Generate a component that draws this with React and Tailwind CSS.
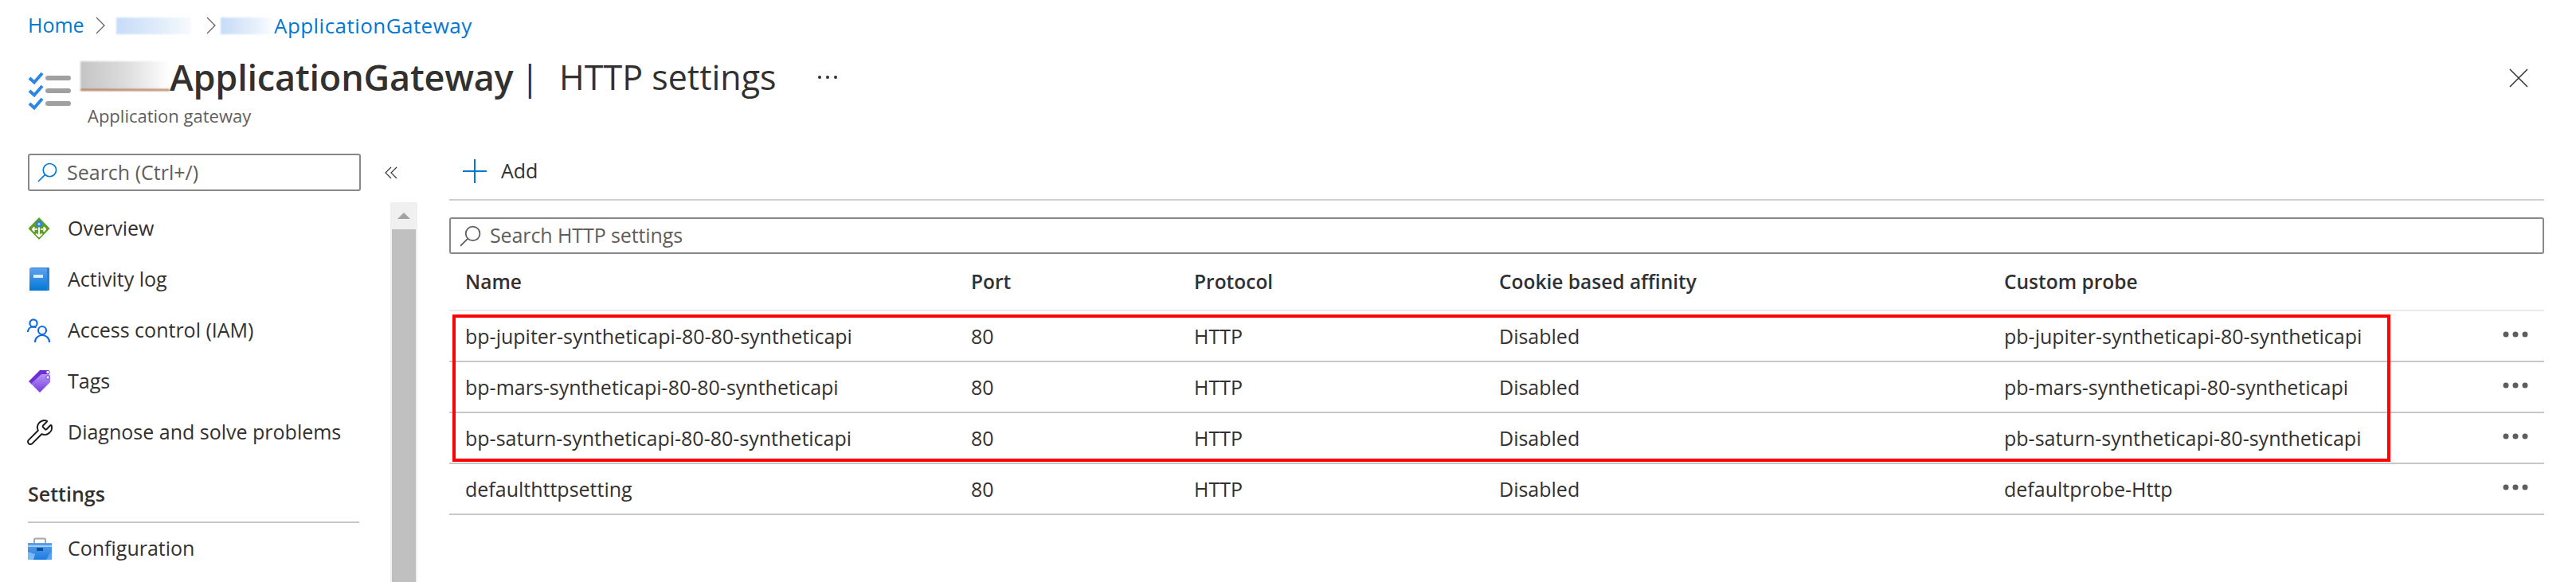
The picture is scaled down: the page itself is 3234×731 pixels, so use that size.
import React from 'react';
import { Wrench } from 'lucide-react';

const rows = [
    ['bp-jupiter-syntheticapi-80-80-syntheticapi', 'pb-jupiter-syntheticapi-80-syntheticapi'],
    ['bp-mars-syntheticapi-80-80-syntheticapi', 'pb-mars-syntheticapi-80-syntheticapi'],
    ['bp-saturn-syntheticapi-80-80-syntheticapi', 'pb-saturn-syntheticapi-80-syntheticapi'],
    ['defaulthttpsetting', 'defaultprobe-Http'],
];

function Crumb() {
    return (
        <svg width="12" height="22" viewBox="0 0 12 22" fill="none" stroke="#605e5c" strokeWidth="1.2">
            <path d="M1 1l10 10L1 21" />
        </svg>
    );
}

function SearchGlass({ color, size }) {
    return (
        <svg width={size} height={size} viewBox="0 0 26 26" fill="none" stroke={color} strokeWidth="1.7">
            <circle cx="16" cy="10" r="8.5" />
            <path d="M10 16L1 25" />
        </svg>
    );
}

function Dots() {
    return (
        <svg width="32" height="8" viewBox="0 0 32 8" fill="#605e5c">
            <circle cx="4" cy="4" r="3.5" />
            <circle cx="16" cy="4" r="3.5" />
            <circle cx="28" cy="4" r="3.5" />
        </svg>
    );
}

function ChecklistIcon() {
    return (
        <svg width="54" height="48" viewBox="0 0 54 48" fill="none">
            <path d="M2 8l6 5.5L18 2" stroke="#2b86e6" strokeWidth="4" />
            <path d="M2 24l6 5.5L18 18" stroke="#2b86e6" strokeWidth="4" />
            <path d="M2 40l6 5.5L18 34" stroke="#2b86e6" strokeWidth="4" />
            <rect x="22" y="5" width="32" height="6" rx="3" fill="#a0a0a0" />
            <rect x="22" y="21" width="32" height="6" rx="3" fill="#a0a0a0" />
            <rect x="22" y="37" width="32" height="6" rx="3" fill="#a0a0a0" />
        </svg>
    );
}

function OverviewIcon() {
    return (
        <svg width="28" height="28" viewBox="0 0 30 30">
            <path d="M15 0l14.5 15L15 30 .5 15z" fill="#5e9e24" />
            <path d="M15 12v13M15 26l-4-4M15 26l4-4M13 16H6M6 16l3-3M6 16l3 3M17 16h7M24 16l-3-3M24 16l-3 3" stroke="#fff" strokeWidth="2" fill="none" />
            <circle cx="15" cy="9" r="4.5" fill="#2f86e0" />
            <circle cx="15" cy="9" r="1.6" fill="#bcdcf8" />
        </svg>
    );
}

function BookIcon() {
    return (
        <svg className="-ml-[1px]" width="30" height="30" viewBox="0 0 30 30">
            <defs>
                <linearGradient id="book" x1="0" y1="0" x2="0" y2="1">
                    <stop offset="0" stopColor="#5ea0ef" />
                    <stop offset="1" stopColor="#0078d4" />
                </linearGradient>
            </defs>
            <path d="M6 0h21a1 1 0 011 1v27a1 1 0 01-1 1H3V3a3 3 0 013-3z" fill="#2a7fd8" />
            <path d="M5 1h20v28H3V3a2 2 0 012-2z" fill="url(#book)" />
            <rect x="8" y="9" width="12" height="4" fill="#d8ecfb" />
        </svg>
    );
}

function UsersIcon() {
    return (
        <svg className="-ml-[1px]" width="30" height="30" viewBox="0 0 30 30" fill="none" stroke="#0f6cde" strokeWidth="2.2">
            <circle cx="8" cy="6" r="4.6" />
            <path d="M1 17c0-4 3-6.500 7-6.500 1.500 0 2.500.3 3.500.8" />
            <circle cx="19" cy="15" r="5" />
            <path d="M10 30c0-5.500 4-9 9-9s9 3.500 9 9" />
        </svg>
    );
}

function TagIcon() {
    return (
        <svg width="30" height="30" viewBox="0 0 30 30">
            <defs>
                <linearGradient id="tag" x1="0" y1="0" x2="0" y2="1">
                    <stop offset="0" stopColor="#b796f9" />
                    <stop offset="1" stopColor="#773adc" />
                </linearGradient>
            </defs>
            <path d="M1 15L15 1h10l2 3-22 15z" fill="#6d2fd5" />
            <path d="M4 18L17 6h9a2 2 0 012 2v8L15 29z" fill="url(#tag)" />
            <circle cx="25" cy="3.500" r="2.200" fill="#fff" stroke="#6d2fd5" />
            <circle cx="25" cy="10" r="2.200" fill="#fff" stroke="#6d2fd5" />
        </svg>
    );
}

function ToolboxIcon() {
    return (
        <svg width="30" height="28" viewBox="0 0 30 28">
            <defs>
                <linearGradient id="box" x1="0" y1="0" x2="0" y2="1">
                    <stop offset="0" stopColor="#5ea0ef" />
                    <stop offset="1" stopColor="#1b7ce0" />
                </linearGradient>
            </defs>
            <path d="M8 7V2.500a1 1 0 011-1h12a1 1 0 011 1V7" fill="none" stroke="#a8a8a8" strokeWidth="2" />
            <rect x="0" y="7" width="30" height="21" fill="url(#box)" />
            <rect x="0" y="10" width="30" height="2" fill="#9fd0f7" />
            <path d="M0 18l9 3-2 7H0z" fill="#7cb8f2" />
            <path d="M23 28c2-2 3-8 7-10v10z" fill="#5ea0ef" />
            <rect x="11" y="13" width="8" height="4" fill="#0f4f96" />
        </svg>
    );
}

const navItems = [
    { label: 'Overview', icon: <OverviewIcon /> },
    { label: 'Activity log', icon: <BookIcon /> },
    { label: 'Access control (IAM)', icon: <UsersIcon /> },
    { label: 'Tags', icon: <TagIcon /> },
    { label: 'Diagnose and solve problems', icon: <Wrench size={36} strokeWidth={1.3} className="-ml-[3px] text-[#1b1a19]" /> },
];

function NavItem({ icon, label }) {
    return (
        <div className="flex items-center h-[64px]">
            <div className="w-[50px] flex items-center">{icon}</div>
            <span>{label}</span>
        </div>
    );
}

function App() {
    return (
        <div className="w-[3234px] h-[731px] overflow-hidden bg-white text-[#323130] text-[25px] font-['Open_Sans',sans-serif]">
            {/* Breadcrumb */}
            <div className="flex items-center h-[64px] pl-[35px] text-[#0078d4]">
                <span className="w-[85px]">Home</span>
                <Crumb />
                <div className="ml-[14px] w-[94px] h-[21px] blur-[1px] bg-[linear-gradient(90deg,#c6dcf8,#e2edfb_60%,#f7fafe)]"></div>
                <div className="ml-[19px]"><Crumb /></div>
                <div className="ml-[6px] w-[67px] h-[21px] blur-[1px] bg-[linear-gradient(90deg,#c6dcf8,#e8f1fc_70%,#ffffff)]"></div>
                <span className="text-[26px] tracking-[0.45px]">ApplicationGateway</span>
            </div>

            {/* Title */}
            <div className="flex h-[129px] pl-[35px] pr-[60px]">
                <div className="pt-[26px] w-[66px]">
                    <ChecklistIcon />
                </div>
                <div>
                    <div className="flex items-center h-[66px] text-[43px]">
                        <div className="w-[112px] h-[37px] -mt-[4px] border-b-2 border-[#a8643a] blur-[1px] bg-[linear-gradient(90deg,#c4c4c4,#dcdcdc_50%,#ffffff)]"></div>
                        <span className="font-semibold text-[45px] tracking-[-0.2px]">ApplicationGateway</span>
                        <span className="ml-[9px]">|</span>
                        <span className="ml-[25px]">HTTP settings</span>
                        <svg className="ml-[51px]" width="26" height="6" viewBox="0 0 26 6" fill="#323130">
                            <circle cx="3" cy="3" r="2" />
                            <circle cx="13" cy="3" r="2" />
                            <circle cx="23" cy="3" r="2" />
                        </svg>
                    </div>
                    <div className="ml-[9px] text-[22px] leading-[16px] mt-[7px] text-[#605e5c]">Application gateway</div>
                </div>
                <div className="ml-auto pt-[22px]">
                    <svg width="24" height="24" viewBox="0 0 24 24" fill="none" stroke="#323130" strokeWidth="1.5">
                        <path d="M1 1l22 22M23 1L1 23" />
                    </svg>
                </div>
            </div>

            <div className="flex h-[538px]">
                {/* Sidebar */}
                <div className="w-[453px] pl-[35px] shrink-0">
                    <div className="flex items-center h-[47px] border-2 border-[#8a8886] rounded-[3px] pl-[10px] text-[#605e5c]">
                        <SearchGlass color="#0078d4" size={25} />
                        <span className="ml-[12px]">Search (Ctrl+/)</span>
                    </div>
                    <div className="mt-[15px]">
                        {navItems.map((item) => (
                            <NavItem key={item.label} icon={item.icon} label={item.label} />
                        ))}
                    </div>
                    <div className="pt-[28px] pb-[18px] leading-[34px] font-semibold border-b-2 border-[#c8c6c4] w-[416px]">
                        Settings
                    </div>
                    <NavItem icon={<ToolboxIcon />} label="Configuration" />
                </div>

                {/* Collapse + scrollbar */}
                <div className="w-[111px] shrink-0 flex flex-col">
                    <div className="h-[47px] flex items-center pl-[30px]">
                        <svg width="16" height="16" viewBox="0 0 16 16" fill="none" stroke="#323130" strokeWidth="1.100">
                            <path d="M8 1L1 8l7 7M15 1L8 8l7 7" />
                        </svg>
                    </div>
                    <div className="mt-[14px] ml-[37px] w-[34px] flex-1 bg-[#f0f0f0] flex flex-col items-center">
                        <div className="h-[34px] flex items-center justify-center">
                            <svg width="16" height="8" viewBox="0 0 16 8" fill="#a3a3a3">
                                <path d="M8 0l8 8H0z" />
                            </svg>
                        </div>
                        <div className="w-[30px] flex-1 bg-[#c0c0c0]"></div>
                    </div>
                </div>

                {/* Main */}
                <div className="w-[2630px] shrink-0">
                    <div className="flex items-center h-[59px] pb-[14px] pl-[17px] border-b-2 border-[#d2d0ce]">
                        <svg width="30" height="30" viewBox="0 0 30 30" fill="none" stroke="#0078d4" strokeWidth="2">
                            <path d="M15 0v30M0 15h30" />
                        </svg>
                        <span className="ml-[18px]">Add</span>
                    </div>
                    <div className="flex items-center h-[46px] mt-[21px] border-2 border-[#8a8886] rounded-[3px] pl-[11px] text-[#605e5c]">
                        <SearchGlass color="#605e5c" size={27} />
                        <span className="ml-[11px] tracking-[-0.1px]">Search HTTP settings</span>
                    </div>

                    <div className="grid grid-cols-[635px_280px_383px_634px_1fr_32px] items-center h-[72px] pl-[20px] pr-[20px] border-b-2 border-[#edebe9] font-semibold text-[24.5px]">
                        <span>Name</span>
                        <span>Port</span>
                        <span>Protocol</span>
                        <span>Cookie based affinity</span>
                        <span>Custom probe</span>
                        <span></span>
                    </div>

                    <div className="relative">
                        {rows.map((row) => (
                            <div key={row[0]} className="grid grid-cols-[635px_280px_383px_634px_1fr_32px] items-center h-[64px] pl-[20px] pr-[20px] pt-[1px] border-b-2 border-[#c8c6c4]">
                                <span>{row[0]}</span>
                                <span>80</span>
                                <span>HTTP</span>
                                <span>Disabled</span>
                                <span>{row[1]}</span>
                                <span className="flex -mt-[6px]"><Dots /></span>
                            </div>
                        ))}
                        {/* Red highlight over the first three rows */}
                        <div className="absolute left-[4px] top-[4px] w-[2433px] h-[185px] border-4 border-[#ff0000]"></div>
                    </div>
                </div>
            </div>
        </div>
    );
}

export default App;
